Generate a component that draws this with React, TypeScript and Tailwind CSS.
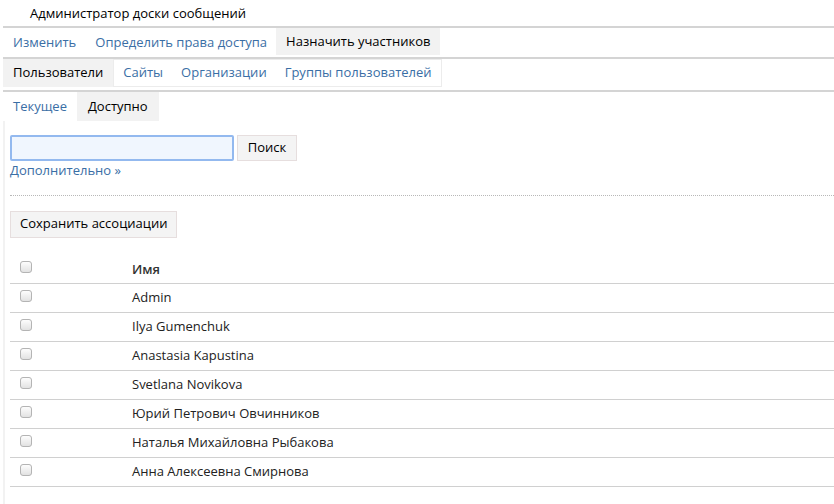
import type { FC } from 'react';

const users: string[] = [
  'Admin',
  'Ilya Gumenchuk',
  'Anastasia Kapustina',
  'Svetlana Novikova',
  'Юрий Петрович Овчинников',
  'Наталья Михайловна Рыбакова',
  'Анна Алексеевна Смирнова',
];

const Box: FC = () => (
  <span className="block h-[12px] w-[12px] rounded-[3px] border border-[#b4b4b4] bg-gradient-to-b from-[#fdfdfd] to-[#e2e2e2]" />
);

const App: FC = () => {
  return (
    <div className="min-h-[504px] w-[834px] bg-white pl-[3px] text-[13px] text-[#222] font-['Open_Sans','Liberation_Sans',sans-serif]">
      <div className="h-[26px] pl-[27px] pt-[4px] text-black">Администратор доски сообщений</div>

      <div className="flex h-[33px] items-stretch border-t-2 border-b-2 border-[#d4d4d4]">
        <span className="flex items-center px-[10px] text-[#3a6ea5]">Изменить</span>
        <span className="flex items-center px-[9px] text-[#3a6ea5]">Определить права доступа</span>
        <span className="mb-[2px] flex items-center bg-[#f2f2f2] px-[10px] text-black">Назначить участников</span>
      </div>

      <div className="flex h-[33px] items-stretch border-b-2 border-[#d4d4d4]">
        <span className="mb-[3px] flex items-center bg-[#f2f2f2] px-[10px] text-black">Пользователи</span>
        <div className="mb-[3px] flex items-stretch border border-[#ececec]">
          <span className="flex items-center px-[9px] text-[#3a6ea5]">Сайты</span>
          <span className="flex items-center px-[9px] text-[#3a6ea5]">Организации</span>
          <span className="flex items-center px-[9px] text-[#3a6ea5]">Группы пользователей</span>
        </div>
      </div>

      <div className="flex h-[29px] items-stretch">
        <span className="flex items-center px-[10px] text-[#3a6ea5]">Текущее</span>
        <span className="flex items-center bg-[#f2f2f2] px-[11px] text-black">Доступно</span>
      </div>

      <div className="border-l-2 border-[#f2f2f2] pl-[5px] pt-[14px]">
        <div className="flex items-center gap-[3px]">
          <div className="h-[26px] w-[224px] rounded-[2px] border-2 border-[#93b9ef] bg-[#f0f6fe]" />
          <button className="h-[26px] w-[60px] border border-[#e6dede] bg-[#f4f4f4] text-black">Поиск</button>
        </div>
        <div className="text-[#3a6ea5]">Дополнительно »</div>

        <div className="mt-[14px] border-t border-dotted border-[#b8b8b8]" />

        <button className="mt-[15px] h-[27px] border border-[#e6dede] bg-[#f4f4f4] px-[9px] text-black">
          Сохранить ассоциации
        </button>

        <table className="mt-[18px] w-full border-collapse text-left">
          <thead>
            <tr className="h-[28px] border-b border-[#d0d0d0]">
              <th className="w-[122px] pl-[10px] pb-[4px] align-middle font-normal">
                <Box />
              </th>
              <th className="font-semibold text-[#333]">Имя</th>
            </tr>
          </thead>
          <tbody>
            {users.map((name) => (
              <tr key={name} className="h-[29px] border-b border-[#d0d0d0]">
                <td className="pl-[10px] pb-[4px] align-middle">
                  <Box />
                </td>
                <td className="text-[#222]">{name}</td>
              </tr>
            ))}
          </tbody>
        </table>
        <div className="h-[20px]" />
      </div>
    </div>
  );
};

export default App;
